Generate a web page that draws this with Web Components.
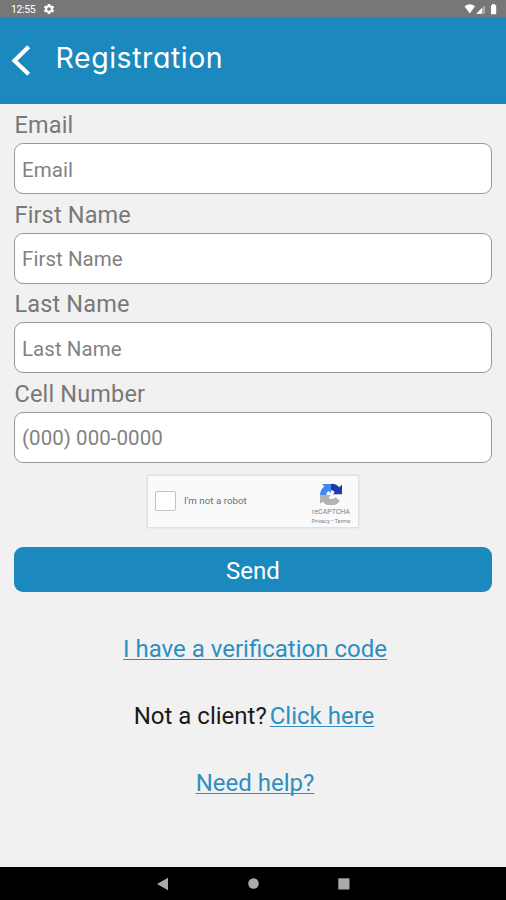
<!DOCTYPE html>
<html lang="en">
<head>
<meta charset="utf-8">
<title>Registration</title>
<style>
html,body{margin:0;height:100%}
body{font-family:Roboto,"Liberation Sans",sans-serif;background:#f1f1f1;overflow:hidden}
</style>
</head>
<body>
<registration-screen></registration-screen>
<script>
const define=(name,html)=>{
  const t=document.createElement('template');
  t.innerHTML=html;
  customElements.define(name,class extends HTMLElement{
    constructor(){super();this.attachShadow({mode:'open'}).append(t.content.cloneNode(true));}
  });
};

define('status-bar',`
<style>
:host{display:flex;align-items:center;height:17px;background:#777;color:#fff;font-size:10.5px;padding:0 8px 0 11px;box-sizing:border-box}
span{letter-spacing:-.35px;line-height:17px;padding-top:1px}
svg{display:block}
.gear{margin-left:8px}
.right{margin-left:auto}
</style>
<span>12:55</span>
<svg class="gear" width="12" height="12" viewBox="0 0 24 24"><path fill="#fff" fill-rule="evenodd" d="M9.500 2h5l.5 3 1.800 1 2.900-1.100 2.500 4.300-2.300 2v1.600l2.300 2-2.500 4.300-2.900-1.100-1.800 1-.5 3h-5l-.5-3-1.800-1-2.900 1.100-2.500-4.300 2.300-2v-1.600l-2.300-2 2.500-4.300 2.900 1.100 1.800-1zM12 8.300a3.700 3.700 0 1 0 0 7.400a3.700 3.700 0 1 0 0-7.400z"/></svg>
<svg class="right" width="34" height="12" viewBox="0 0 34 12">
<path fill="#fff" d="M.5 3.200Q5.700-.5 11 3.200L5.800 10.600z"/>
<path fill="#a9a9a9" d="M21 2v8.700h-8.700z"/><path fill="#fff" d="M18 5v5.700h-5.700z"/>
<path fill="#fff" d="M27 2.200h1.300V1h2.600v1.200h1.300v9H27z"/></svg>`);

define('app-header',`
<style>
:host{display:flex;align-items:center;height:87px;background:#1b89be;color:#fff;box-sizing:border-box;padding-left:11px;border-bottom:1px solid #1a84b7}
svg{display:block}
h1{margin:-4px 0 0 24.500px;font:400 28.500px/40px Inter,sans-serif;font-feature-settings:"cv11";letter-spacing:.55px}
</style>
<svg width="20" height="31" viewBox="0 0 20 31"><path d="M17.700 1.800L3.500 15.800L17.700 29.300" fill="none" stroke="#fff" stroke-width="4.200"/></svg>
<h1><slot></slot></h1>`);

customElements.define('form-field',class extends HTMLElement{
  connectedCallback(){
    const r=this.attachShadow({mode:'open'});
    r.innerHTML=`
<style>
:host{display:block;height:89.6px}
label{display:block;font-size:23.500px;line-height:28px;height:33px;padding:1px 0 0 .5px;color:#787878;box-sizing:border-box;letter-spacing:.15px}
.box{height:51px;box-sizing:border-box;border:1px solid #999;border-radius:9px;background:#fff;padding:1.500px 7px 0;font-size:20.500px;line-height:48px;color:#828282;letter-spacing:.05px}
</style>
<label></label><div class="box"><slot></slot></div>`;
    r.querySelector('label').textContent=this.getAttribute('label');
  }
});

define('robot-check',`
<style>
:host{display:flex;align-items:center;width:212px;height:53px;margin:0 auto;box-sizing:border-box;background:#fafafa;border:1px solid #e0e0e0;box-shadow:0 0 2px #ddd;padding:0 6px 0 7px}
.tick{width:21px;height:20px;box-sizing:border-box;border:1.500px solid #c3c3c3;border-radius:2px;background:#fff;margin-top:-2px}
.msg{font-size:9.800px;color:#707070;margin:-2px 0 0 8px}
.brand{margin-left:auto;width:42px;padding-top:3px;display:flex;flex-direction:column;align-items:center;color:#808080;white-space:nowrap}
svg{display:block}
.name{font-size:7px;line-height:9px;margin-top:3px}
.legal{font-size:5.700px;line-height:8px}
</style>
<div class="tick"></div><span class="msg">I'm not a robot</span>
<div class="brand">
<svg width="22" height="23" viewBox="0 -4 64 64">
<path fill="#1c3aa9" d="M64 30v-28l-7.700 7.700A32 32 0 0 0 32 0v18a14 14 0 0 1 11 6.500L37 30z"/>
<path fill="#4285f4" d="M32 0H6l6.700 7.700A32 32 0 0 0 0 32h18a14 14 0 0 1 6.500-11L32 27z"/>
<path fill="#b3b3b3" d="M0 32v26l7.700-6A32 32 0 0 0 58 50L45 39a14 14 0 0 1-20 1.500L32 32z"/></svg>
<span class="name">reCAPTCHA</span><span class="legal">Privacy • Terms</span></div>`);

define('primary-button',`
<style>
:host{display:block;height:45px;border-radius:9px;background:#1b89be;color:#fff;text-align:center;font-size:24px;line-height:48px}
</style><slot></slot>`);

define('text-link',`
<style>
:host{display:inline;color:#2f8ec1;text-decoration:underline;text-decoration-thickness:1px;text-underline-offset:2px;text-decoration-skip-ink:none}
</style><slot></slot>`);

define('nav-bar',`
<style>
:host{display:flex;justify-content:center;align-items:center;gap:79px;height:33px;background:#000}
svg{display:block}
</style>
<svg width="12" height="14" viewBox="0 0 12 14"><path d="M0 7L11 .8V13.200z" fill="#aaa"/></svg>
<svg width="11" height="11" viewBox="0 0 11 11"><circle cx="5.500" cy="5.500" r="5.300" fill="#aaa"/></svg>
<svg width="12" height="12" viewBox="0 0 12 12"><path d="M.3.3h11.200v11.200H.3z" fill="#aaa"/></svg>`);

define('registration-screen',`
<style>
:host{display:flex;flex-direction:column;height:900px;width:506px;background:#f1f1f1}
main{flex:1;padding:6px 14px 0 14px;box-sizing:border-box}
robot-check{margin-top:7px}
primary-button{margin-top:19px}
.links{display:flex;flex-direction:column;align-items:center;gap:39px;margin-top:43px;font-size:24px;line-height:28px;color:#1a1a1a;margin-left:4px}
p{margin:0}
.client{display:flex;gap:3px;margin-left:-2px}
</style>
<status-bar></status-bar>
<app-header>Registration</app-header>
<main>
<form-field label="Email">Email</form-field>
<form-field label="First Name">First Name</form-field>
<form-field label="Last Name">Last Name</form-field>
<form-field label="Cell Number">(000) 000-0000</form-field>
<robot-check></robot-check>
<primary-button>Send</primary-button>
<div class="links">
<p><text-link>I have a verification code</text-link></p>
<p class="client"><span>Not a client?</span><text-link>Click here</text-link></p>
<p><text-link>Need help?</text-link></p>
</div>
</main>
<nav-bar></nav-bar>`);
</script>
</body>
</html>
